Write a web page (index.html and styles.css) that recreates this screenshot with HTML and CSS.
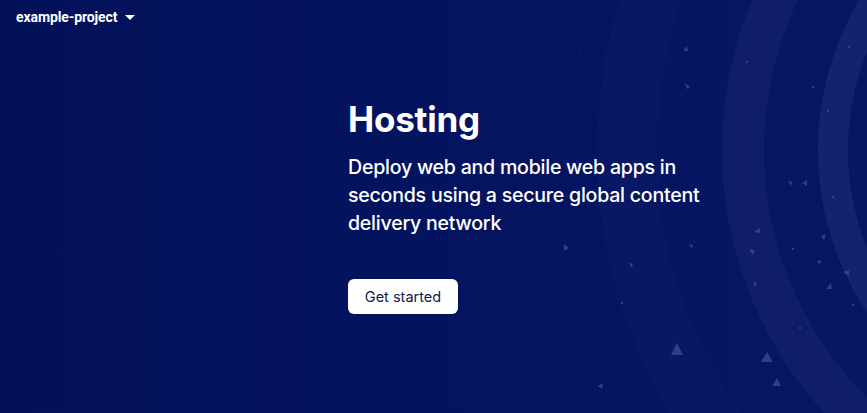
FILE: index.html
```html
<!DOCTYPE html>
<html>
<head>
<meta charset="utf-8">
<link rel="stylesheet" href="styles.css">
</head>
<body>
<div class="page">
  <svg class="deco" width="867" height="413" viewBox="0 0 867 413" xmlns="http://www.w3.org/2000/svg">
    <defs>
      <linearGradient id="bg" x1="0" y1="0" x2="1" y2="0">
        <stop offset="0" stop-color="#03115a"/>
        <stop offset="0.6" stop-color="#051460"/>
        <stop offset="1" stop-color="#071762"/>
      </linearGradient>
    </defs>
    <rect width="867" height="413" fill="url(#bg)"/>
    <circle cx="1112" cy="150" r="485" fill="none" stroke="#091864" stroke-width="60"/>
    <circle cx="1112" cy="150" r="369" fill="none" stroke="#101e69" stroke-width="42"/>
    <circle cx="1112" cy="150" r="279" fill="none" stroke="#14236d" stroke-width="30"/>
    <g fill="#3a4a8c" opacity="0.8">
      <polygon points="683,51 687,46 688,51"/>
      <polygon points="685,83 690,87 687,89"/>
      <polygon points="788,181 792,182 791,186"/>
      <polygon points="802,183 807,180 807,186"/>
      <polygon points="754,232 759,228 761,233"/>
      <polygon points="749,249 755,250 753,255"/>
      <polygon points="689,244 693,245 692,249"/>
      <polygon points="564,244 569,248 564,251"/>
      <polygon points="629,263 633,264 631,268"/>
      <polygon points="753,282 757,283 755,287"/>
      <polygon points="821,236 826,234 824,240"/>
      <polygon points="817,261 821,260 820,265"/>
      <polygon points="826,289 831,283 832,289"/>
      <polygon points="843,272 849,270 849,276"/>
      <polygon points="671,355 677,343 683,355"/>
      <polygon points="761,362 767,352 773,362"/>
      <polygon points="772,386 777,378 781,386"/>
      <polygon points="598,386 603,383 602,389"/>
    </g>
    <g fill="#3a4a8c" opacity="0.8">
      <rect x="746" y="61" width="2" height="2"/>
      <rect x="812" y="86" width="2" height="2"/>
      <rect x="827" y="110" width="2" height="2"/>
      <rect x="832" y="196" width="2" height="2"/>
      <rect x="792" y="248" width="2" height="2"/>
      <rect x="799" y="327" width="2" height="2"/>
      <rect x="852" y="304" width="2" height="2"/>
      <rect x="848" y="46" width="2" height="2"/>
      <rect x="621" y="302" width="2" height="2"/>
      <rect x="579" y="50" width="1" height="1"/>
    </g>
  </svg>

  <header class="topbar">
    <span class="project">example-project</span>
    <svg class="caret" width="10" height="5" viewBox="0 0 10 5"><polygon points="0,0 10,0 5,5" fill="#ffffff"/></svg>
  </header>

  <main class="hero">
    <h1 class="title">Hosting</h1>
    <p class="subtitle">Deploy web and mobile web apps in seconds using a secure global content delivery network</p>
    <button class="cta">Get started</button>
  </main>
</div>
</body>
</html>
```

FILE: styles.css
```css
html, body {
  margin: 0;
  padding: 0;
}
body {
  width: 867px;
  height: 413px;
  overflow: hidden;
  background: #03115a;
}
.page {
  position: relative;
  width: 867px;
  height: 413px;
  overflow: hidden;
  display: flex;
  flex-direction: column;
}
.deco {
  position: absolute;
  left: 0;
  top: 0;
  z-index: 0;
}
.topbar {
  position: relative;
  z-index: 1;
  display: flex;
  align-items: center;
  gap: 8px;
  padding: 7px 0 0 16px;
  height: 20px;
}
.project {
  font-family: Roboto, "Liberation Sans", sans-serif;
  font-weight: 700;
  font-size: 14px;
  color: #ffffff;
  letter-spacing: -0.1px;
}
.caret {
  display: block;
  margin-top: 1px;
}
.hero {
  position: relative;
  z-index: 1;
  display: flex;
  flex-direction: column;
  align-items: flex-start;
  padding: 0 0 0 348px;
  margin-top: 71px;
}
.title {
  margin: 0;
  font-family: Inter, "Open Sans", sans-serif;
  font-weight: 700;
  font-size: 35px;
  line-height: 42px;
  color: #ffffff;
  letter-spacing: -0.2px;
}
.subtitle {
  margin: 13px 0 0 0;
  width: 366px;
  font-family: Inter, "Open Sans", sans-serif;
  font-weight: 500;
  font-size: 19.6px;
  line-height: 28px;
  color: #ffffff;
  letter-spacing: -0.25px;
}
.cta {
  margin-top: 42px;
  width: 110px;
  height: 35px;
  border: none;
  border-radius: 6px;
  background: #ffffff;
  color: #0b1a4d;
  font-family: Inter, "Open Sans", sans-serif;
  font-size: 14.5px;
  font-weight: 400;
  padding: 0;
  cursor: pointer;
}
```
